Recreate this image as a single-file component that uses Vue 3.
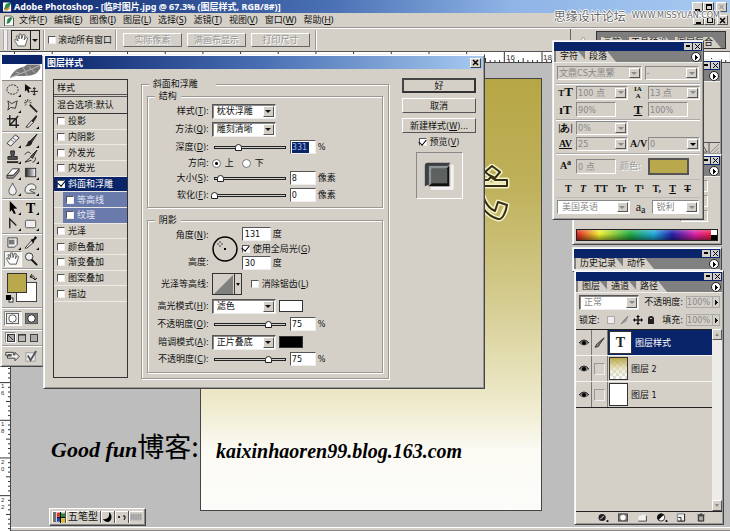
<script setup>
import { ref } from 'vue'

const menus = [
  ['文件', 'F'], ['编辑', 'E'], ['图像', 'I'], ['图层', 'L'], ['选择', 'S'],
  ['滤镜', 'T'], ['视图', 'V'], ['窗口', 'W'], ['帮助', 'H'],
]

const effects = ref([
  { name: '投影' }, { name: '内阴影' }, { name: '外发光' }, { name: '内发光' },
  { name: '斜面和浮雕', on: true, active: true },
  { name: '等高线', sub: true }, { name: '纹理', sub: true },
  { name: '光泽' }, { name: '颜色叠加' }, { name: '渐变叠加' }, { name: '图案叠加' }, { name: '描边' },
])

const corner = '<path d="M16 12v3h-3z" fill="#000"/>'
const toolGroups = [
  [
    ['椭圆选框', '<ellipse cx="7" cy="7" rx="6" ry="5" fill="none" stroke="#222" stroke-dasharray="2 1"/>' + corner],
    ['移动', '<path d="M1 1l7 5-3 .5 1 3.500-1.500.5-1.500-3L1 9z" fill="#111"/><path d="M11 5v8M7 9h8M9.500 6.500L11 5l1.500 1.500M9.500 11.500L11 13l1.500-1.500" stroke="#111" fill="none"/>'],
    ['套索', '<path d="M2 2l4 3 6-3-2 8-5-1-3 3 1-5z" fill="none" stroke="#333"/>' + corner],
    ['魔棒', '<path d="M6 6l8 8" stroke="#222" stroke-width="2"/><path d="M4 0v3M0 4h3M1 1l2 2M7 1L5.500 2.500M1 7l1.500-1.500M8 4H6" stroke="#333"/>'],
    ['裁切', '<path d="M4 0v11h10M1 4h10v10M4 11l9-10" fill="none" stroke="#222" stroke-width="1.500"/>'],
    ['切片', '<path d="M2 13l6-7 2 2-5 5z" fill="#ddd" stroke="#333"/><path d="M8 6l5-6 1 2-4 6z" fill="#222"/>' + corner],
  ],
  [
    ['修复画笔', '<path d="M1 10L10 1l4 3-9 9z" fill="#eee" stroke="#333"/><path d="M5 6l4 3M7 4l4 3" stroke="#777"/>' + corner],
    ['画笔', '<path d="M14 0L7 7l2 1z" fill="#444" stroke="#222"/><path d="M7 7c-4 0-2 4-6 6 4 1 8-1 8-5z" fill="#222"/>' + corner],
    ['仿制图章', '<path d="M5 1h4v3L8 7h4v3H2V7h4L5 4z" fill="#555" stroke="#222"/><path d="M1 13h12" stroke="#222" stroke-width="2"/>' + corner],
    ['历史画笔', '<path d="M14 0L7 7l2 2z" fill="#555" stroke="#222"/><path d="M7 8l-6 5 7-2M1 5c2-4 5-3 6-1M12 8c1 3-1 5-3 5" fill="none" stroke="#222"/>' + corner],
    ['橡皮擦', '<path d="M1 10l6-7h7l-6 7z" fill="#fff" stroke="#333"/><path d="M1 10v3h7l6-7V3l-6 7z" fill="#999" stroke="#333"/>' + corner],
    ['渐变', '<defs><linearGradient id="toolGrad"><stop offset="0" stop-color="#222"/><stop offset="1" stop-color="#fff"/></linearGradient></defs><rect x="1.500" y="2.500" width="11" height="9" fill="url(#toolGrad)" stroke="#333"/>' + corner],
    ['模糊', '<path d="M7 1c1 4 4 5 4 9a4 4 0 0 1-8 0c0-4 3-5 4-9z" fill="#eee" stroke="#555"/>' + corner],
    ['海绵', '<path d="M1 10c0-5 3-8 7-8 4 0 6 4 4 6-2 1-4-2-6 1l6 3H3z" fill="#eee" stroke="#444"/>' + corner],
  ],
  [
    ['路径选择', '<path d="M4 0l8 8-4 .3 2.500 5-2 .7L6 9.500 4 12z" fill="#000"/>' + corner],
    ['文字', '<text x="2" y="13" font-family="Liberation Serif, serif" font-size="15" font-weight="bold">T</text>' + corner],
    ['钢笔', '<path d="M4 12V2l7 7" fill="none" stroke="#222" stroke-width="1.500"/>' + corner],
    ['矩形', '<rect x="1.500" y="3.500" width="11" height="8" rx="1" fill="#eee" stroke="#555"/>' + corner],
  ],
  [
    ['注释', '<path d="M2 2h10v7l-3 3H2z" fill="#eee" stroke="#444"/><path d="M3 4h6v5H3z" fill="#777"/>' + corner],
    ['吸管', '<path d="M1 13l7-8 2 2-7 6z" fill="#eee" stroke="#333"/><path d="M7 4l3-1 2-3 2 2-3 3-1 3z" fill="#111"/>' + corner],
    ['抓手', '<path d="M4 13C2 10 0 8 1 6l3 2-2-5 2 0 1 3V1h2l.5 5L9 1.500l2 .5-1 5 2-3 1.500 1L11 13z" fill="#fff" stroke="#555"/>', true],
    ['缩放', '<circle cx="5.500" cy="5" r="4" fill="#eee" stroke="#333"/><path d="M8 8l6 6" stroke="#111" stroke-width="2"/>'],
  ],
]

const layers = [
  { name: '图层样式', kind: 'text', active: true },
  { name: '图层 2', kind: 'grad' },
  { name: '图层 1', kind: 'plain' },
]
const typeStyles = ['b', 'i', 'TT', 'Tr', 'T¹', 'T,', 'u', 's']
const ticks = Array.from({ length: 170 }, (_, i) => i)
const rulerNums = [16, 18, 20, 22]
</script>

<template>
  <div class="app">
    <header class="titlebar">
      <svg class="logo" viewBox="0 0 10 11"><path d="M0 1h7l2 2v8H0z" fill="#fff" /><path d="M1 9L3 3l4-2 2 1-3 6z" fill="#2b8a4b" /><path d="M1 10l5-4 2 1-3 3z" fill="#e58b2a" /></svg>
      <h1>Adobe Photoshop - [临时图片.jpg @ 67.3% (图层样式, RGB/8#)]</h1>
      <span class="wbtns"><button aria-label="最小化"><i class="min"></i></button><button aria-label="还原"><i class="res"></i></button><button aria-label="关闭" class="dim">×</button></span>
    </header>
    <nav class="menubar">
      <svg class="logo" viewBox="0 0 10 11"><path d="M0 1h7l2 2v8H0z" fill="#fff" stroke="#555" /><path d="M2 9l1-5 3-2 2 1-3 5z" fill="#2b8a4b" /></svg>
      <button v-for="m in menus" :key="m[1]">{{ m[0] }}(<u>{{ m[1] }}</u>)</button>
      <span class="wbtns"><button aria-label="最小化文档"><i class="min"></i></button><button aria-label="还原文档"><i class="res"></i></button><button aria-label="关闭文档"><svg viewBox="0 0 7 7"><path d="M1 1l5 5M6 1L1 6" stroke="#000" stroke-width="1.500" /></svg></button></span>
    </nav>
    <div class="options">
      <span class="grip"></span>
      <button class="curtool" aria-label="抓手工具">
        <svg viewBox="0 0 14 14"><path d="M4 13C2 10 0 8 1 6l3 2-2-5 2 0 1 3V1h2l.5 5L9 1.500l2 .5-1 5 2-3 1.500 1L11 13z" fill="#fff" stroke="#666" /></svg>
        <b><i class="tri"></i></b>
      </button>
      <span class="vline"></span>
      <label class="check"><input type="checkbox"><span>滚动所有窗口</span></label>
      <span class="vline"></span>
      <div class="obtns"><button disabled>实际像素</button><button disabled>满画布显示</button><button disabled>打印尺寸</button></div>
      <span class="vline"></span>
      <div class="wellbox">
        <svg viewBox="0 0 12 12"><circle cx="7" cy="5" r="3" fill="#eee" stroke="#777" /><path d="M5 7l-4 4M8 8l1 3" stroke="#777" /></svg>
        <div class="well"><button>画笔</button><button>工具预设</button><button>图层复合</button></div>
      </div>
    </div>
    <p class="mark"><span>思缘设计论坛</span><small>WWW.MISSYUAN.COM</small></p>

    <main class="work">
      <svg class="rulertop" height="11" width="100%">
        <path v-for="t in ticks" :key="t" :d="`M${14 + t * 4.71} ${t % 8 === 0 ? 0 : t % 4 ? 8 : 6}V11`" stroke="#333" transform="translate(.5)" />
        <text x="506" y="8">16</text><text x="543" y="8">18</text>
      </svg>
      <svg class="rulerleft" width="11" height="100%">
        <path v-for="t in ticks.slice(0, 110)" :key="t" :d="`M${t % 8 === 0 ? 0 : t % 4 ? 8 : 6} ${t * 4.71 - 20}H11`" stroke="#333" transform="translate(0 .5)" />
        <g v-for="(n, i) in rulerNums" :key="n"><text x="1" :y="325 + i * 38">{{ String(n)[0] }}</text><text x="1" :y="332 + i * 38">{{ String(n)[1] }}</text></g>
      </svg>

      <div class="doc">
        <svg viewBox="0 0 30 64" class="glyph">
          <g fill="none" stroke-linejoin="round">
            <path d="M1 8L8 2l8 6-5 6-6-3zM-4 16h8l3-3 4 3h12v6H-4M-3 24c2 10 6 20 14 23l3-9 9 3c-1 6-4 15-9 14C7 53 0 47-4 39" stroke="#f6f2c8" stroke-width="5" />
            <path d="M1 8L8 2l8 6-5 6-6-3zM-4 16h8l3-3 4 3h12v6H-4M-3 24c2 10 6 20 14 23l3-9 9 3c-1 6-4 15-9 14C7 53 0 47-4 39" stroke="#342f12" stroke-width="2" />
            <path d="M-4 19h24M16 52l4-9" stroke="#fffbe0" />
          </g>
        </svg>
      </div>
    </main>
    <p class="sign"><b>Good fun</b><span>博客:</span></p>
    <p class="blog">kaixinhaoren99.blog.163.com</p>

    <aside class="win tools">
      <div class="bar"></div>
      <div class="feather">
        <svg viewBox="0 0 38 16"><path d="M4 14C9 5 13 4 20 2l2-2h14c0 2 1 4-1 6-3 5-8 6-14 6-7 1-10-1-16 2z" fill="#777" /><path d="M5 14C16 9 26 6 36 1M14 9l-4-1M20 7l-2-4M26 6l-1-4M20 8l3 4M27 5l4 4" stroke="#bbb" fill="none" /></svg>
      </div>
      <div v-for="(g, i) in toolGroups" :key="i" class="tg">
        <button v-for="t in g" :key="t[0]" :aria-label="t[0]" :class="{ on: t[2] }"><svg viewBox="0 0 16 15" v-html="t[1]"></svg></button>
      </div>
      <div class="colors">
        <svg viewBox="0 0 34 32">
          <rect x="11.500" y="10.500" width="20" height="19" fill="#fff" stroke="#444" />
          <rect x="2.500" y="1.500" width="19" height="19" fill="#b9a94c" stroke="#333" />
          <path d="M25 5c3-2 5-1 5 3M25 5l2-3M25 5l3 1M30 8l-2-2M30 8l2-2" stroke="#222" fill="none" />
          <rect x="4" y="26" width="4" height="4" fill="#fff" stroke="#333" /><rect x="1" y="23" width="5" height="5" fill="#000" />
        </svg>
      </div>
      <div class="pair">
        <button class="on" aria-label="标准模式"><svg viewBox="0 0 16 14"><rect x="1.500" y="1.500" width="13" height="11" fill="#eee" stroke="#555" /><circle cx="8" cy="7" r="4" fill="#fff" stroke="#555" /></svg></button>
        <button aria-label="快速蒙版"><svg viewBox="0 0 16 14"><rect x="1.500" y="1.500" width="13" height="11" fill="#777" stroke="#555" /><circle cx="8" cy="7" r="4" fill="#fff" stroke="#222" /></svg></button>
      </div>
      <div class="pair trio">
        <button class="on" aria-label="标准屏幕"><svg viewBox="0 0 10 10"><rect x="1.500" y="1.500" width="7" height="7" fill="#aaa" stroke="#333" /><path d="M2 2l5 5" stroke="#333" /></svg></button>
        <button aria-label="带菜单全屏"><svg viewBox="0 0 10 10"><rect x="1.500" y="1.500" width="7" height="7" fill="#bbb" stroke="#444" /><path d="M1 2h8" stroke="#333" /></svg></button>
        <button aria-label="全屏"><svg viewBox="0 0 10 10"><rect x="1.500" y="1.500" width="7" height="7" fill="#aaa" stroke="#444" /></svg></button>
      </div>
      <div class="pair last">
        <button aria-label="跳转"><svg viewBox="0 0 18 14"><path d="M1 2h9v3h2V2l5 5-5 5V9H3V6H1z" fill="#eee" stroke="#222" /><path d="M3 4h5v3H3z" fill="#555" /></svg></button>
        <button aria-label="ImageReady"><svg viewBox="0 0 14 14"><rect x="1" y="3" width="10" height="9" fill="#eee" stroke="#999" /><path d="M3 6l3 5 6-10" stroke="#555" stroke-width="2" fill="none" /></svg></button>
      </div>
    </aside>

    <section class="win dialog">
      <div class="dtitle"><h2>图层样式</h2><button aria-label="关闭对话框"><svg viewBox="0 0 7 7"><path d="M1 1l5 5M6 1L1 6" stroke="#000" stroke-width="1.500" /></svg></button></div>
      <form class="dbody" @submit.prevent>
        <div class="slist">
          <div class="shead">样式</div>
          <div class="sblend">混合选项:默认</div>
          <div class="sitems">
            <label v-for="e in effects" :key="e.name" :class="{ active: e.active, sub: e.sub }"><span><input v-model="e.on" type="checkbox">{{ e.name }}</span></label>
          </div>
        </div>

        <fieldset class="outer">
          <legend>斜面和浮雕</legend>
          <fieldset class="inner">
            <legend>结构</legend>
            <div class="rows struct">
              <label for="st">样式(<u>T</u>):</label>
              <span class="combo w63"><select id="st"><option>枕状浮雕</option></select><b><i class="tri"></i></b></span>
              <label for="te">方法(<u>Q</u>):</label>
              <span class="combo w63"><select id="te"><option>雕刻清晰</option></select><b><i class="tri"></i></b></span>
              <label for="dp">深度(<u>D</u>):</label>
              <span class="sl"><input type="range" aria-label="深度" min="0" max="1000" value="331"><input id="dp" class="num hl" value="331"><em>%</em></span>
              <span class="lab">方向:</span>
              <span class="radios"><label><input type="radio" name="dir" checked> 上</label><label><input type="radio" name="dir"> 下</label></span>
              <label for="sz">大小(<u>S</u>):</label>
              <span class="sl"><input type="range" aria-label="大小" min="0" max="100" value="8"><input id="sz" class="num" value="8"><em>像素</em></span>
              <label for="so">软化(<u>F</u>):</label>
              <span class="sl"><input type="range" aria-label="软化" min="0" max="16" value="0"><input id="so" class="num" value="0"><em>像素</em></span>
            </div>
          </fieldset>
          <fieldset class="inner second">
            <legend>阴影</legend>
            <div class="anglebox">
              <div class="alabs"><label for="an">角度(<u>N</u>):</label><label for="al">高度:</label></div>
              <svg class="dial" viewBox="0 0 26 26"><circle cx="13" cy="13" r="12" fill="none" stroke="#000" stroke-width="1.500" /><rect x="12" y="12" width="2" height="2" /><path d="M8 5v2M8 9v2M5 8h2M9 8h2" stroke="#444" /></svg>
              <div class="avals">
                <span><input id="an" class="num" value="131"><em>度</em></span>
                <label class="check"><input type="checkbox" checked><span>使用全局光(<u>G</u>)</span></label>
                <span><input id="al" class="num" value="30"><em>度</em></span>
              </div>
            </div>
            <div class="rows shade">
              <span class="lab">光泽等高线:</span>
              <span class="cont">
                <button aria-label="等高线" class="contour"><svg viewBox="0 0 21 20"><path d="M1 20L20 1v19z" fill="#808080" /></svg><b><i class="tri"></i></b></button>
                <label class="check"><input type="checkbox"><span>消除锯齿(<u>L</u>)</span></label>
              </span>
              <label for="hm">高光模式(<u>H</u>):</label>
              <span class="mode"><span class="combo w63"><select id="hm"><option>滤色</option></select><b><i class="tri"></i></b></span><button class="sw white" aria-label="高光颜色"></button></span>
              <label for="ho">不透明度(<u>O</u>):</label>
              <span class="sl"><input type="range" aria-label="高光不透明度" value="75"><input id="ho" class="num" value="75"><em>%</em></span>
              <label for="sm">暗调模式(<u>A</u>):</label>
              <span class="mode"><span class="combo w63"><select id="sm"><option>正片叠底</option></select><b><i class="tri"></i></b></span><button class="sw black" aria-label="暗调颜色"></button></span>
              <label for="sh">不透明度(<u>C</u>):</label>
              <span class="sl"><input type="range" aria-label="暗调不透明度" value="75"><input id="sh" class="num" value="75"><em>%</em></span>
            </div>
          </fieldset>
        </fieldset>

        <div class="dside">
          <button class="def">好</button>
          <button>取消</button>
          <button>新建样式(<u>W</u>)...</button>
          <label class="check"><input type="checkbox" checked><span>预览(<u>V</u>)</span></label>
          <div class="prev">
            <svg viewBox="0 0 46 46"><path d="M8 34V13q0-3 3-3h23l-3 5H13v17z" fill="#3c3e46" /><path d="M14 36h22V12" fill="none" stroke="#f4f4f4" stroke-width="3" /><path d="M12 13h21v21H12z" fill="#111" /><path d="M12 34V13h21l-3 3H15v15z" fill="#8f9594" /><path d="M15 16h16v15H15z" fill="#5d6160" /></svg>
          </div>
        </div>
      </form>
    </section>

    <section class="win pal nav">
      <div class="bar"><i class="mn"></i><i class="cl"></i></div>
      <div class="tabs"><button class="fly" aria-label="导航器菜单"></button></div>
      <div class="navbody"></div>
      <div class="navfoot"><svg viewBox="0 0 22 11"><path d="M0 10l5-6 4 6zM11 0v11" fill="none" stroke="#444" /><path d="M12 11L22 1M16 11l6-6M20 11l2-2" stroke="#888" /></svg></div>
    </section>
    <section class="win pal color">
      <div class="bar"><i class="mn"></i><i class="cl"></i></div>
      <div class="tabs"><button class="fly" aria-label="颜色菜单"></button></div>
      <div class="rgb"><input aria-label="红"><input aria-label="绿"><input aria-label="蓝"></div>
      <div class="spectrum"><i></i></div>
    </section>
    <section class="win pal hist">
      <div class="bar"><i class="mn"></i><i class="cl"></i></div>
      <div class="tabs"><button>历史记录</button><button>动作</button><button class="fly" aria-label="历史记录菜单"></button></div>
    </section>

    <section class="win pal layers">
      <div class="bar"><i class="mn"></i><i class="cl"></i></div>
      <div class="tabs"><button>图层</button><button>通道</button><button>路径</button><button class="fly" aria-label="图层菜单"></button></div>
      <div class="lrow">
        <span class="combo off w60"><select aria-label="混合模式" disabled><option>正常</option></select><b><i class="tri"></i></b></span>
        <label for="op">不透明度:</label><span class="pct"><input id="op" value="100%" disabled><b></b></span>
      </div>
      <div class="lrow lock">
        <span>锁定:</span>
        <svg viewBox="0 0 50 10"><rect x="1.500" y="1.500" width="7" height="7" fill="#eee" stroke="#aaa" /><path d="M15 9l3-4 4-4-2 5z" fill="#999" stroke="#666" stroke-width=".5" /><path d="M32 1v8M28 5h8" stroke="#222" stroke-width="1.500" /><path d="M32 0l2 2h-4zM32 10l2-2h-4zM27 5l2-2v4zM37 5l-2-2v4z" /><path d="M42 9V4q0-3 3-3t3 3v5z" fill="#222" /><path d="M44 4q1-2 2 0" stroke="#ccc" fill="none" /></svg>
        <label for="fi">填充:</label><span class="pct"><input id="fi" value="100%" disabled><b></b></span>
      </div>
      <div class="lmain">
        <ul>
          <li v-for="l in layers" :key="l.name" :class="{ active: l.active }">
            <span class="eye"><svg viewBox="0 0 10 8"><path d="M0 4Q5-2 10 4 5 9 0 4z" fill="#777" /><path d="M0 4Q5-2 10 4" fill="none" stroke="#222" /><circle cx="5" cy="4" r="2" /></svg></span>
            <span class="link"><svg v-if="l.active" viewBox="0 0 12 12"><path d="M1 11c3 0 5-1 5-3L11 1 4 7c-2 1-1 3-3 4z" fill="#888" stroke="#222" /></svg><i v-else></i></span>
            <span class="thumb" :class="l.kind">{{ l.kind === 'text' ? 'T' : '' }}</span>
            <span>{{ l.name }}</span>
          </li>
        </ul>
        <div class="scroll"><b><i class="tri up"></i></b><b><i class="tri"></i></b></div>
      </div>
      <div class="lfoot">
        <svg viewBox="0 0 12 10"><circle cx="5" cy="5" r="4" fill="#222" /><path d="M3 7l4-4" stroke="#fff" /><path d="M10 8h2v2h-2z" /></svg>
        <svg viewBox="0 0 12 10"><rect x="1" y="1" width="10" height="8" fill="#777" stroke="#444" /><circle cx="6" cy="5" r="3" fill="#fff" /></svg>
        <svg viewBox="0 0 12 10"><path d="M2 3h3l1-1h4v7H2z" fill="#f2f2ee" /><path d="M2 9h9V3" fill="none" stroke="#444" /></svg>
        <svg viewBox="0 0 12 10"><circle cx="5" cy="5" r="4" fill="#fff" stroke="#222" /><path d="M2 8A4 4 0 0 1 8 2z" fill="#111" /><path d="M10 8h2v2h-2z" /></svg>
        <svg viewBox="0 0 12 10"><path d="M2 1h8v8H2z" fill="#eee" stroke="#777" /><path d="M3 5h3v4M10 1v8H2" fill="none" stroke="#222" /></svg>
        <svg viewBox="0 0 12 10"><path d="M3 3h6v6H3zM2 2h8M5 1h2" fill="#777" stroke="#222" /><path d="M5 4v4M7 4v4" stroke="#ddd" /></svg>
      </div>
    </section>

    <section class="win pal char">
      <div class="bar"><i class="mn"></i><i class="cl"></i></div>
      <div class="tabs"><button>字符</button><button>段落</button><button class="fly" aria-label="字符菜单"></button></div>
      <div class="crow fonts">
        <span class="combo off"><select aria-label="字体" disabled><option>文鼎CS大黑繁</option></select><b><i class="tri"></i></b></span>
        <span class="combo off"><select aria-label="字型" disabled><option>-</option></select><b><i class="tri"></i></b></span>
      </div>
      <div class="cgrid">
        <span class="ic"><small>T</small>T</span><span class="combo off"><select aria-label="字号" disabled><option>100 点</option></select><b><i class="tri"></i></b></span>
        <span class="ic stack"><small>IA</small><small>A</small></span><span class="combo off"><select aria-label="行距" disabled><option>13 点</option></select><b><i class="tri"></i></b></span>
        <span class="ic">ıT</span><input aria-label="垂直缩放" value="90%" disabled>
        <span class="ic"><u>T</u></span><input aria-label="水平缩放" value="100%" disabled>
      </div>
      <div class="cgrid">
        <span class="ic sm">|あ|</span><span class="combo off"><select aria-label="比例间距" disabled><option>0%</option></select><b><i class="tri"></i></b></span><span></span><span></span>
        <span class="ic sm"><u>AV</u></span><span class="combo off"><select aria-label="字距" disabled><option>25</option></select><b><i class="tri"></i></b></span>
        <span class="ic sm">A/V</span><span class="combo off dk"><select aria-label="字偶" disabled><option>0</option></select><b><i class="tri"></i></b></span>
      </div>
      <div class="cgrid base">
        <span class="ic sm">A<sup>a</sup></span><input aria-label="基线" value="0 点" disabled>
        <span class="clab">颜色:</span><button class="cswatch" aria-label="文字颜色"></button>
      </div>
      <div class="styles">
        <button v-for="s in typeStyles" :key="s" :class="'s-' + s">{{ s.length === 1 ? 'T' : s }}</button>
      </div>
      <div class="crow lang">
        <span class="combo off wht"><select aria-label="语言" disabled><option>美国英语</option></select><b><i class="tri"></i></b></span>
        <span class="aa">a<sub>a</sub></span>
        <span class="combo off wht"><select aria-label="消除锯齿方法" disabled><option>锐利</option></select><b><i class="tri"></i></b></span>
      </div>
    </section>

    <div class="ime">
      <span><svg viewBox="0 0 12 12"><path d="M4 2q2-1 3 0v4q-1-1-3 0z" fill="#d33" /><path d="M8 2q2 1 4 0v4q-2 1-4 0z" fill="#2a8a3a" /><path d="M4 7q2-1 3 0v4q-1-1-3 0z" fill="#24c" /><path d="M8 7q2 1 4 0v4q-2 1-4 0z" fill="#db2" /><path d="M0 2h3M0 4h3M0 6h3M0 8h3M0 10h3M7.500 1v11M4 6.500h8" stroke="#111" /></svg></span>
      <span class="wubi">五笔型</span>
      <span><svg viewBox="0 0 12 12"><path d="M7 1c4 3 3 9-1 10-2 0-4-1-5-3 5 1 7-3 6-7z" /></svg></span>
      <span><svg viewBox="0 0 12 12"><circle cx="3" cy="6" r="1" /><path d="M7 5h2v2l-1 2" stroke="#000" fill="none" /></svg></span>
      <span><svg viewBox="0 0 13 12"><path d="M0 2h13v8H0z" fill="#bbb" /><path d="M1 4h11M1 6h11M1 8h11" stroke="#777" stroke-dasharray="1 1" /></svg></span>
    </div>
    <footer class="status"></footer>
  </div>
</template>

<style>
body { background: #bdbdbd; }
</style>

<style scoped>
.app { --face: #d4d0c8; --navy: #0a246a; position: relative; display: flex; flex-direction: column; min-height: 100vh; overflow: hidden; background: #bdbdbd; color: #111; font: 9px/12px "DejaVu Sans Condensed", "Noto Sans CJK SC", sans-serif; }
.app * { box-sizing: border-box; }
h1, h2, p, ul { margin: 0; padding: 0; }
h1, h2 { font: bold 9px/12px "Noto Sans", "Noto Sans CJK SC", sans-serif; color: #fff; white-space: nowrap; }
button, input, select { font: inherit; color: inherit; margin: 0; padding: 0; border: 0; border-radius: 0; background: none; min-width: 0; }
button { white-space: nowrap; }
svg { display: block; }
em { font-style: normal; }
.tri { display: block; width: 0; height: 0; border: 3px solid transparent; border-top-color: #111; border-bottom: 0; }

.titlebar { display: flex; align-items: center; gap: 2px; height: 13px; padding: 0 3px; background: linear-gradient(90deg, #0a246a, #4a70b4 45%, #8fb4e6 70%, #a6caf0); }
.logo { width: 9px; height: 11px; }
.wbtns { display: flex; margin-left: auto; }
.wbtns button { display: grid; place-items: center; width: 11px; height: 10px; background: var(--face); border: 1px solid; border-color: #fff #555 #555 #fff; font: bold 9px/8px "Liberation Sans", sans-serif; }
.wbtns button:last-child { margin-left: 2px; }
.wbtns svg { width: 7px; height: 7px; }
.wbtns .dim { color: #999; }
.min { width: 5px; height: 2px; background: #000; align-self: end; }
.res { width: 6px; height: 6px; border: 1px solid #000; border-top-width: 2px; }
.menubar { display: flex; align-items: center; gap: 7px; height: 15px; padding: 0 2px 0 4px; background: var(--face); border-bottom: 1px solid #99968f; }
.menubar .logo { width: 11px; margin-right: -3px; }
.menubar > button { font-family: "Noto Sans", "Noto Sans CJK SC", sans-serif; }
.options { display: flex; align-items: center; height: 24px; padding-left: 3px; background: var(--face); border-top: 1px solid #fff; border-bottom: 1px solid #555; }
.grip { width: 5px; height: 20px; border: 1px solid #aaa; border-width: 0 1px; background: #eee; margin-right: 3px; }
.curtool { display: flex; align-items: center; width: 29px; height: 20px; border: 1px solid #222; }
.curtool svg { width: 19px; height: 14px; }
.curtool b { display: grid; place-items: center; width: 9px; height: 18px; border-left: 1px solid #222; }
.vline { width: 2px; height: 20px; border-left: 1px solid #999; border-right: 1px solid #fff; margin: 0 3px; }
.check { display: flex; align-items: center; gap: 3px; white-space: nowrap; }
.options .check { gap: 2px; }
input[type=checkbox] { appearance: none; flex: none; display: grid; place-items: center; width: 8px; height: 8px; background: #fff; border: 1px solid; border-color: #555 #eee #eee #555; }
input[type=checkbox]:checked::after { content: ""; width: 4px; height: 6px; margin-top: -2px; border: solid #000; border-width: 0 1px 1px 0; rotate: 40deg; }
.obtns { display: flex; gap: 5px; margin: 0 2px 0 3px; }
.obtns button { width: 59px; height: 14px; border: 1px solid; border-color: #fff #666 #666 #fff; color: #999; text-shadow: 1px 1px #fff; }
.wellbox { display: flex; gap: 10px; align-items: center; margin-left: auto; width: 160px; height: 22px; padding-left: 8px; border-left: 1px solid #666; }
.wellbox svg { width: 12px; height: 12px; }
.well { display: flex; flex: 1; height: 18px; margin-right: 4px; padding: 5px 4px 0; background: #7d7d7d; border: 1px solid #333; }
.well button { height: 11px; line-height: 11px; padding: 0 8px 0 2px; background: var(--face); clip-path: polygon(0 0, calc(100% - 9px) 0, 100% 100%, 0 100%); }
.mark { position: absolute; right: 10px; top: 9px; z-index: 9; display: flex; gap: 6px; align-items: center; color: #666; text-shadow: 1px 0 #fff, -1px 0 #fff, 0 1px #fff, 0 -1px #fff; font: 12px/14px "Noto Sans CJK SC", sans-serif; }
.mark small { font: 8px/10px "DejaVu Sans", sans-serif; }

.work { position: relative; flex: 1; }
.rulertop { background: #fff; border-bottom: 1px solid #444; }
.rulertop text, .rulerleft text { font: 8px "Liberation Sans", sans-serif; fill: #333; }
.rulerleft { position: absolute; left: 0; top: 11px; background: #fff; border-right: 1px solid #444; }
.rulerleft text { font-size: 6px; }
.doc { position: absolute; left: 200px; top: 26px; bottom: 16px; width: 342px; border: 1px solid #444; background: linear-gradient(#b6a645, #bfb15b 25%, #d3ca8c 50%, #eeeacb 75%, #fbfaf3 86%, #fcfcfa); }
.glyph { position: absolute; left: 283px; top: 85px; width: 30px; height: 64px; }
.sign { position: absolute; left: 51px; top: 426px; display: flex; align-items: baseline; color: #000; }
.sign b { font: italic bold 22px/40px "Liberation Serif", serif; }
.sign span { font: 27px/40px "Noto Sans CJK SC", sans-serif; }
.blog { position: absolute; left: 216px; top: 438px; color: #000; font: italic bold 20px/26px "Liberation Serif", serif; }
.status { height: 4px; background: var(--face); border-top: 1px solid #fff; border-bottom: 1px solid #888; }

.win { position: absolute; background: var(--face); border: 1px solid; border-color: #eee #444 #444 #eee; box-shadow: inset 1px 1px #fff, inset -1px -1px #999; }
.bar { height: 9px; background: var(--navy); display: flex; justify-content: flex-end; align-items: center; gap: 1px; padding-right: 1px; }
.bar i { width: 8px; height: 7px; }
.bar .mn { background: linear-gradient(#000, #000) 2px 2px / 4px 2px no-repeat, var(--face); }
.bar .cl { background: linear-gradient(45deg, transparent 42%, #000 42% 58%, transparent 58%) 2px 1px / 5px 5px no-repeat, linear-gradient(-45deg, transparent 42%, #000 42% 58%, transparent 58%) 2px 1px / 5px 5px no-repeat, var(--face); }

.tools { left: 0; top: 54px; width: 44px; padding: 0 1px 2px 1px; }
.feather { background: #fff; border-bottom: 1px solid #888; padding-left: 4px; }
.feather svg { width: 100%; height: 16px; }
.tg { display: grid; grid-template-columns: 18px 18px; grid-auto-rows: 16px; justify-content: center; padding: 1px 0; border-bottom: 1px solid #999; box-shadow: 0 1px #fff; }
.tg button { display: grid; place-items: center; }
.tg svg { width: 15px; height: 14px; }
.on { background: #f4f3ef; border: 1px solid; border-color: #888 #fff #fff #888; }
.colors { padding: 3px 4px 3px 3px; }
.colors svg { width: 34px; height: 32px; }
.pair { display: flex; justify-content: center; gap: 1px; padding: 3px 0; border-top: 1px solid #999; box-shadow: inset 0 1px #fff; }
.pair button { width: 18px; height: 15px; display: grid; place-items: center; }
.pair svg { width: 15px; height: 13px; }
.trio { padding: 2px 0; }
.trio button { width: 11px; height: 11px; }
.trio svg { width: 10px; height: 10px; }
.last { padding-bottom: 0; }

.dialog { left: 43px; top: 54px; width: 442px; padding: 1px; }
.dtitle { display: flex; align-items: center; justify-content: space-between; height: 13px; padding: 0 2px; background: linear-gradient(90deg, #0a246a, #4a70b4 50%, #a6caf0); }
.dtitle button { display: grid; place-items: center; width: 11px; height: 10px; background: var(--face); border: 1px solid; border-color: #fff #444 #444 #fff; }
.dtitle svg { width: 7px; height: 7px; }
.dbody { display: flex; align-items: flex-start; padding: 9px 7px 8px 8px; }
.slist { width: 75px; height: 299px; margin-top: 1px; border: 1px solid #333; }
.shead { height: 17px; padding: 2px 3px; border-bottom: 3px double #555; }
.sblend { height: 17px; padding: 2px 3px; border-bottom: 1px solid #333; white-space: nowrap; }
.sitems { display: grid; grid-auto-rows: 1fr; height: 188px; }
.sitems label { border-bottom: 1px solid #eceae4; display: flex; }
.sitems span { flex: 1; display: flex; align-items: center; gap: 3px; padding-left: 3px; }
.sitems .active span { background: var(--navy); color: #fff; }
.sitems .active input { color: #000; }
.sitems .sub { padding-left: 9px; }
.sitems .sub span { background: #6a7bab; color: #e4e8f4; padding-left: 3px; }

fieldset { min-width: 0; margin: 0; padding: 0; border: 1px solid #9a9790; box-shadow: 1px 1px #fff, inset 1px 1px #fff; }
legend { background: var(--face); height: 12px; padding: 0 4px; margin-left: 7px; position: relative; }
.outer { width: 249px; height: 301px; margin-left: 13px; padding: 0 5px; }
.outer > legend { padding-right: 18px; margin-left: 2px; }
.inner { height: 118px; }
.inner.second { margin-top: 6px; height: 159px; }
.rows { display: grid; grid-template-columns: 61px 1fr; column-gap: 3px; align-items: center; white-space: nowrap; }
.rows > label, .lab, .alabs { text-align: right; }
.struct { grid-template-rows: 18px 18px 18px 14px 16px 18px; }
.shade { grid-template-rows: 26px 18px 18px 18px 16px; }
.combo { display: grid; height: 15px; background: #fff; border: 1px solid; border-color: #555 #eee #eee #555; box-shadow: inset 1px 1px #888; }
.combo select { appearance: none; grid-area: 1 / 1; padding: 0 12px 0 4px; width: 100%; opacity: 1; line-height: 12px; }
.combo b { grid-area: 1 / 1; justify-self: end; width: 11px; margin: 1px; background: var(--face); border: 1px solid; border-color: #fff #555 #555 #fff; display: grid; place-items: center; pointer-events: none; }
.w63 { width: 64px; }
.sl { display: flex; align-items: center; }
.sl em { margin-left: 2px; }
input[type=range] { appearance: none; width: 79px; height: 12px; margin-left: -1px; background: linear-gradient(#ccc, #ccc) 4px 6px / 70px 1px no-repeat, linear-gradient(#222, #222) 3px 5px / 72px 3px no-repeat; }
input[type=range]::-webkit-slider-thumb { appearance: none; width: 7px; height: 7px; border: 1px solid #222; border-radius: 4px 4px 0 0; background: #fff; }
.num { width: 26px; height: 14px; padding: 0 1px; background: #fff; border: 1px solid; border-color: #555 #eee #eee #555; }
.hl { background: linear-gradient(var(--navy), var(--navy)) 1px 1px / 17px 11px no-repeat, #fff; color: #9db4e0; }
.radios { display: flex; gap: 8px; }
.radios label { display: flex; align-items: center; gap: 4px; }
input[type=radio] { appearance: none; width: 9px; height: 9px; border-radius: 50%; background: #fff; border: 1px solid #777; }
input[type=radio]:checked { background: radial-gradient(circle, #000 1px, #fff 2px); }
.anglebox { display: grid; grid-template-columns: 61px 26px 1fr; column-gap: 3px; align-items: center; height: 45px; }
.alabs { display: flex; flex-direction: column; gap: 15px; }
.dial { width: 26px; height: 26px; }
.avals { display: grid; grid-template-rows: 16px 13px 16px; align-items: center; padding-left: 1px; }
.avals > span { display: flex; align-items: center; gap: 2px; }
.avals .num { width: 29px; padding-left: 2px; }
.cont, .mode { display: flex; align-items: center; gap: 3px; }
.cont { gap: 9px; }
.contour { display: flex; width: 30px; height: 22px; border: 1px solid #333; }
.contour svg { width: 21px; height: 20px; }
.contour b { flex: 1; height: 20px; border-left: 1px solid #333; display: grid; place-items: center; }
.contour .tri { border-width: 3px 2px 0; }
.sw { width: 24px; height: 12px; border: 1px solid #333; }
.white { background: #fff; }
.black { background: #000; }
.dside { display: flex; flex-direction: column; align-items: center; flex: 1; padding-left: 13px; }
.dside > button { width: 74px; height: 15px; margin-bottom: 5px; border: 1px solid; border-color: #fff #555 #555 #fff; }
.dside > .def { border: 2px solid #444; border-color: #444 #333 #333 #444; }
.dside .check { margin: -2px 0 4px; height: 12px; }
.prev { width: 47px; height: 47px; border: 1px solid; border-color: #888 #fff #fff #888; }
.prev svg { width: 45px; height: 45px; }

.pal { right: 8px; width: 150px; padding: 1px; }
.tabs { display: flex; align-items: flex-end; height: 12px; padding: 0 1px 0 2px; background: #808080; border-bottom: 1px solid #eee; }
.tabs button:not(.fly) { height: 11px; line-height: 11px; padding: 0 9px 0 4px; margin-right: -2px; background: var(--face); clip-path: polygon(0 0, calc(100% - 9px) 0, 100% 100%, 0 100%); }
.fly { width: 10px; height: 10px; border-radius: 50%; margin-left: auto; border: 1px solid #222; background: linear-gradient(#000, #000) 3px 2px / 1px 5px no-repeat, linear-gradient(#000, #000) 4px 3px / 1px 3px no-repeat, linear-gradient(#000, #000) 5px 4px / 1px 1px no-repeat, #fff; }
.nav { top: 59px; }
.navbody { height: 60px; }
.navfoot { display: flex; justify-content: flex-end; border-top: 1px solid #555; }
.navfoot svg { width: 22px; height: 10px; }
.color { top: 154px; }
.rgb { display: grid; justify-items: end; gap: 3px; padding: 3px 12px 7px 0; }
.rgb input { width: 28px; height: 12px; border: 1px solid; border-color: #999 #fff #fff #999; }
.spectrum { display: flex; justify-content: flex-end; height: 12px; margin: 0 2px 2px; border: 1px solid #222; background: linear-gradient(rgba(255,255,255,.25), transparent 40%, rgba(0,0,0,.45)), linear-gradient(90deg, #d22 0, #ee3 16%, #2a4 38%, #2ad 55%, #22a 68%, #d2a 84%, #e22 100%); }
.spectrum i { width: 6px; background: linear-gradient(#fff 50%, #000 50%); }
.hist { top: 247px; }
.layers { right: 6px; top: 270px; bottom: 6px; display: flex; flex-direction: column; }
.lrow { display: flex; align-items: center; gap: 3px; height: 18px; padding: 0 2px 0 3px; white-space: nowrap; }
.lrow label { margin-left: auto; }
.w60 { width: 60px; }
.combo.off { color: #888; }
.combo.off .tri { border-top-color: #888; }
.combo.dk .tri { border-top-color: #000; }
.lock svg { width: 50px; height: 10px; margin-left: 3px; }
.pct { display: flex; width: 34px; height: 12px; border: 1px solid #aaa; color: #888; }
.pct input { width: 25px; line-height: 10px; }
.pct b { flex: 1; border-left: 1px solid #aaa; background: linear-gradient(#111, #111) 2px 3px / 1px 5px no-repeat, linear-gradient(#111, #111) 3px 4px / 1px 3px no-repeat, linear-gradient(#111, #111) 4px 5px / 1px 1px no-repeat; }
.lmain { flex: 1; display: flex; border-bottom: 1px solid #222; }
.lmain ul { flex: 1; list-style: none; border-top: 1px solid #222; }
.lmain li { display: flex; align-items: center; height: 26px; border-bottom: 1px solid #f4f4f0; }
.lmain li:last-child { border-color: #222; }
.lmain li.active { background: var(--navy); color: #fff; }
.eye, .link { display: grid; place-items: center; width: 16px; height: 25px; background: var(--face); border-right: 1px solid #777; }
.eye svg { width: 10px; height: 8px; }
.link svg { width: 11px; height: 11px; }
.link i { width: 11px; height: 12px; border: 1px solid; border-color: #999 #eee #eee #999; }
.thumb { width: 19px; height: 23px; margin: 0 3px 0 1px; border: 1px solid #333; background: #fff; color: #222; text-align: center; font: bold 14px/21px "Liberation Serif", serif; }
.thumb.text { width: 23px; }
.thumb.grad { background: linear-gradient(#b9a94c, rgba(220,214,160,.6) 50%, transparent), repeating-conic-gradient(#ddd 0 25%, #fff 0 50%) 0 0 / 6px 6px; }
.scroll { display: flex; flex-direction: column; justify-content: space-between; width: 10px; background: #eeece8; }
.scroll b { display: grid; place-items: center; height: 11px; background: var(--face); border: 1px solid; border-color: #fff #555 #555 #fff; }
.scroll .tri { border-width: 3px 2px 0; border-top-color: #888; }
.scroll .up { rotate: 180deg; }
.lfoot { display: flex; justify-content: space-between; align-items: center; height: 11px; padding: 0 15px 0 21px; }
.lfoot svg { width: 12px; height: 9px; }

.char { right: 26px; top: 40px; width: 152px; z-index: 5; }
.crow { display: flex; padding: 3px 3px; gap: 3px; align-items: center; }
.fonts { height: 20px; }
.fonts .combo:first-child { flex: 85; }
.fonts .combo:last-child { flex: 54; }
.char .combo { background: var(--face); border-color: #888 #fff #fff #888; box-shadow: none; height: 14px; }
.char .combo.wht { background: #fff; }
.char .combo select { padding-left: 1px; }
.cgrid { display: grid; grid-template-columns: 17px 52px 16px 52px; column-gap: 2px; row-gap: 2px; align-items: center; padding: 1px 1px 2px; margin: 0 2px; border-top: 1px solid #aaa; box-shadow: inset 0 1px #fff; }
.cgrid input { width: 40px; height: 15px; border: 1px solid; border-color: #888 #fff #fff #888; color: #888; padding-left: 1px; }
.ic { font: bold 13px/14px "Liberation Serif", serif; text-align: center; white-space: nowrap; }
.ic small { font-size: 9px; }
.stack { display: grid; }
.ic.stack small { font-size: 7px; line-height: 7px; }
.ic.sm { font-size: 10px; }
.ic sup { font-size: 8px; line-height: 8px; }
.base { height: 26px; }
.clab { color: #999; margin-left: -10px; white-space: nowrap; text-shadow: 1px 1px #fff; }
.cswatch { width: 41px; height: 17px; background: #b9a94c; border: 2px solid #555; }
.styles { display: flex; justify-content: space-between; height: 19px; margin: 0 2px; padding: 0 9px; border: 1px solid #bbb; border-width: 1px 0; align-items: center; font: bold 10px/12px "Liberation Serif", serif; }
.s-i { font-style: italic; }
.s-u { text-decoration: underline; }
.s-s { text-decoration: line-through; }
.lang { padding: 2px 3px 4px; }
.lang .combo:first-child { flex: 73; }
.lang .combo:last-child { flex: 47; }
.char .lang .combo select { padding-left: 4px; }
.aa { width: 16px; font: 12px/12px "Liberation Serif", serif; text-align: center; white-space: nowrap; }
.aa sub { vertical-align: -2px; font-size: 10px; line-height: 8px; }

.ime { position: absolute; left: 49px; bottom: 5px; display: flex; height: 18px; background: var(--face); border: 1px solid; border-color: #fff #444 #444 #fff; box-shadow: inset -1px -1px #888; padding: 2px; }
.ime span { display: grid; place-items: center; width: 14px; border-right: 1px solid #555; box-shadow: inset 1px 1px #fff; }
.ime span:last-child { border: 0; }
.ime svg { width: 12px; height: 12px; }
.ime .wubi { width: 35px; font-size: 10px; white-space: nowrap; }
</style>
